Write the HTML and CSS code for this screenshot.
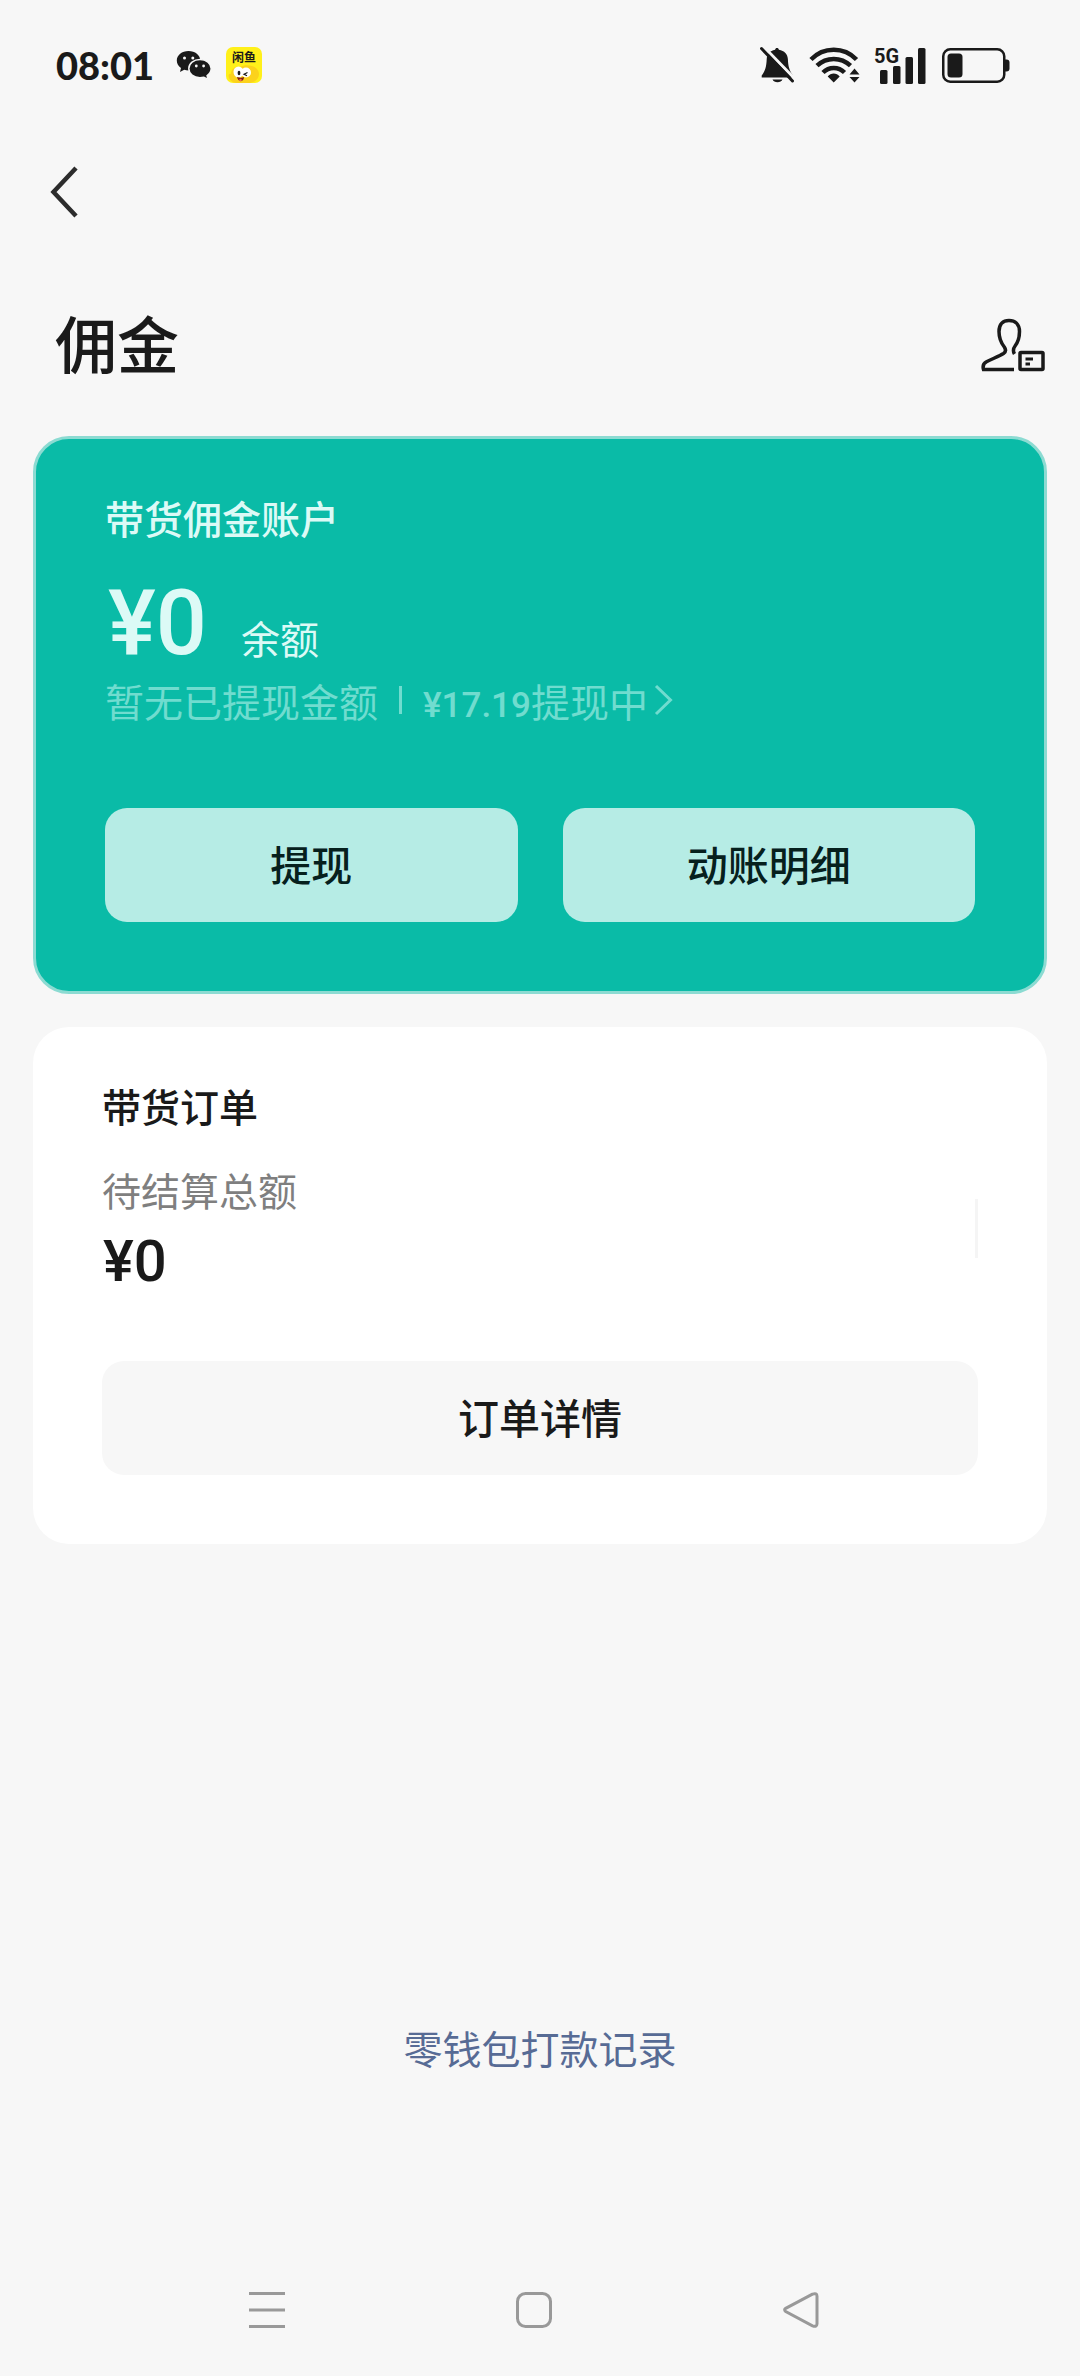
FILE: index.html
```html
<!DOCTYPE html>
<html lang="zh-CN">
<head>
<meta charset="utf-8">
<meta name="viewport" content="width=device-width, initial-scale=1">
<title>佣金</title>
<link rel="stylesheet" href="styles.css">
</head>
<body>
<div class="page">
  <div class="status">
    <div class="status-group">
      <span class="time">08:01</span>
      <svg width="36" height="30" viewBox="0 0 36 30" aria-hidden="true">
        <path fill="#1a1a1a" d="M12.500 1C5.900 1 .8 5.100.8 10.600c0 3.100 1.600 5.700 4.200 7.500l-1 4 4.200-2.300c1.400.4 2.800.6 4.300.6 6.600 0 11.800-4.300 11.800-9.800S19.100 1 12.500 1z"/>
        <path fill="#1a1a1a" stroke="#f7f7f7" stroke-width="1.500" d="M24 9.500c-6.300 0-11.200 4-11.200 9.100s4.900 9.100 11.200 9.100c1.400 0 2.700-.2 3.900-.5l4.100 2.200-.9-3.700c2.500-1.700 4.100-4.200 4.100-7.100 0-5.100-4.900-9.100-11.200-9.100z"/>
        <g fill="#f7f7f7"><circle cx="8.500" cy="8" r="1.500"/><circle cx="16.800" cy="8" r="1.500"/><circle cx="20.300" cy="16" r="1.400"/><circle cx="27.600" cy="16" r="1.400"/></g>
      </svg>
      <svg width="36" height="36" viewBox="0 0 36 36" role="img" aria-label="闲鱼">
        <rect width="36" height="36" rx="7" fill="#fff01a"/>
        <path fill="#fcd21c" d="M3 31c-1-3 0-5 2-4 0-5 4-8 9-7 7-4 19-1 19 7 0 5-4 8-9 9H12c-4 0-7-1-9-5z"/>
        <text class="app-label" x="18" y="15" text-anchor="middle">闲鱼</text>
        <ellipse cx="12.500" cy="25" rx="5" ry="5.500" fill="#fff"/><ellipse cx="20" cy="25.500" rx="5" ry="5" fill="#fff"/>
        <ellipse cx="13" cy="26" rx="1.400" ry="2.200" fill="#1a1a1a"/>
        <path d="M21.500 25.500l-3.500 1.700 3 1.500" fill="none" stroke="#1a1a1a" stroke-width="1.200"/>
        <path d="M11 30c3 1 5 1 7 0 0 5.500-6 5.500-7 0z" fill="#7c1f12"/><circle cx="14.500" cy="33" r="1.300" fill="#f36b4b"/>
      </svg>
    </div>
    <div class="status-group">
      <svg width="36" height="36" viewBox="0 0 36 36" aria-hidden="true">
        <path fill="#1a1a1a" d="M18 1c1 0 1.700.6 1.900 1.700 5.500.9 8.800 4.600 9 9.600.2 7.200 1.500 11 4.900 16v2.200H2.700v-2c3.500-4.500 4.700-9 5-16.200.2-5 3.200-8.700 8.400-9.600C16.300 1.600 17 1 18 1zM13.500 32.500h10c-.8 1.700-2.700 2.700-5 2.700s-4.200-1-5-2.700z"/>
        <path d="M4-1l32 33" stroke="#f7f7f7" stroke-width="3"/>
        <path d="M2.500 1.500l31 32.500" stroke="#1a1a1a" stroke-width="3" stroke-linecap="round"/>
      </svg>
      <svg width="51" height="36" viewBox="0 0 51 36" aria-hidden="true">
        <g fill="none" stroke="#1a1a1a" stroke-width="4.500"><path d="M2 12.500c12.500-13 33-13 45.500 0"/><path d="M8 18.700c9.500-9 24-9 33.500 0"/><path d="M14 25.500c6-6 15.500-6 21.500 0"/></g>
        <path fill="#1a1a1a" d="M24.700 35.500l-6-6c3-4 9-4 12 0zM45.500 21.500l5 6h-10zM45.500 35.500l-5-5.500h10z"/>
      </svg>
      <svg width="54" height="37" viewBox="0 0 54 37" role="img" aria-label="5G">
        <text class="net-label" x="0" y="16">5G</text>
        <g fill="#1a1a1a"><rect x="6" y="23" width="7.500" height="14" rx="1.500"/><rect x="19" y="19" width="7.500" height="18" rx="1.500"/><rect x="31.500" y="10" width="7.500" height="27" rx="1.500"/><rect x="44" y="1" width="7.500" height="36" rx="1.500"/></g>
      </svg>
      <svg width="68" height="35" viewBox="0 0 68 35" aria-hidden="true">
        <rect x="1.250" y="1.250" width="61" height="32.500" rx="7" fill="none" stroke="#1a1a1a" stroke-width="2.500"/>
        <rect x="5.500" y="5.500" width="15" height="24" rx="3.500" fill="#1a1a1a"/>
        <path fill="#1a1a1a" d="M63 11.500h1.500a3 3 0 0 1 3 3v6a3 3 0 0 1-3 3H63z"/>
      </svg>
    </div>
  </div>

  <header class="header">
    <button class="back" type="button" aria-label="返回">
      <svg width="28" height="52" viewBox="0 0 28 52" aria-hidden="true"><path d="M26 2L3.500 26 26 50" fill="none" stroke="#2c2c2c" stroke-width="4.500"/></svg>
    </button>
    <div class="title-row">
      <h1 class="title">佣金</h1>
      <button class="profile" type="button" aria-label="账户信息">
        <svg width="64" height="54" viewBox="0 0 64 54" fill="none" stroke="#1a1a1a" stroke-width="3.500" aria-hidden="true">
          <path d="M33 51.500H2.500C1.500 48 2 45.700 5.500 43.800c6-3.200 12-5.300 17-8.300 2.500-1.700 2.500-4 .8-6.500C19 23.500 18 18 18 13.500 18 6 22 2.500 28 2.500S38.500 6 38.500 13.500c0 5.500-1.300 10.300-4.300 14.200-1.700 2.300-2.500 5.300-.7 8.300"/>
          <rect x="39" y="34.500" width="23" height="17" rx="1"/>
          <path stroke-width="3" d="M44.500 41h7.500M44.500 46h4.500"/>
        </svg>
      </button>
    </div>
  </header>

  <main class="cards">
    <section class="card account">
      <h2 class="card-title">带货佣金账户</h2>
      <div class="balance"><span class="amount">¥0</span><span class="balance-label">余额</span></div>
      <div class="detail">
        <span>暂无已提现金额</span>
        <span class="divider"></span>
        <a class="pending" href="#withdrawing"><span><span class="pending-amount">¥17.19</span>提现中</span><svg width="20" height="32" viewBox="0 0 20 32" aria-hidden="true"><path d="M2 2l14.500 14L2 30" fill="none" stroke="currentColor" stroke-width="3"/></svg></a>
      </div>
      <div class="actions">
        <button class="btn" type="button">提现</button>
        <button class="btn" type="button">动账明细</button>
      </div>
    </section>

    <section class="card orders">
      <h2 class="card-title">带货订单</h2>
      <div class="totals">
        <div class="total">
          <div class="total-label">待结算总额</div>
          <div class="total-amount">¥0</div>
        </div>
        <span class="totals-rule"></span>
      </div>
      <button class="btn" type="button">订单详情</button>
    </section>
  </main>

  <footer class="footer">
    <a class="records" href="#records">零钱包打款记录</a>
  </footer>

  <nav class="system-nav" aria-label="系统导航">
    <button type="button" aria-label="最近任务"><svg width="36" height="36" viewBox="0 0 36 36"><path d="M0 1.500h36M0 18h36M0 34.500h36"/></svg></button>
    <button type="button" aria-label="主屏幕"><svg width="36" height="36" viewBox="0 0 36 36"><rect x="1.500" y="1.500" width="33" height="33" rx="8"/></svg></button>
    <button type="button" aria-label="返回"><svg width="36" height="36" viewBox="0 0 36 36"><path d="M29.500 2.200L2.700 16.300q-2.200 1.500 0 3.200L29.500 33.800q4.500 1.500 4.500-2V4.200q0-3.500-4.500-2z"/></svg></button>
  </nav>
</div>
</body>
</html>
```
FILE: styles.css
```css
* {
  box-sizing: border-box;
}

body {
  margin: 0;
  background: #f7f7f7;
  color: #1a1a1a;
  font-family: "Noto Sans CJK SC", sans-serif;
  font-size: 39px;
  line-height: 54px;
}

h1,
h2 {
  margin: 0;
}

button {
  margin: 0;
  padding: 0;
  border: 0;
  background: none;
  color: inherit;
  font: inherit;
  cursor: pointer;
}

a {
  color: inherit;
  text-decoration: none;
}

svg {
  display: block;
  flex: none;
  overflow: visible;
}

.page {
  display: flex;
  flex-direction: column;
  min-height: 100vh;
}

.status {
  display: flex;
  align-items: center;
  justify-content: space-between;
  height: 130px;
  padding: 0 70px 0 56px;
}

.status-group {
  display: flex;
  align-items: center;
  gap: 14px;
}

.time {
  margin-right: 8px;
  font-family: Lato, sans-serif;
  font-size: 38px;
  font-weight: 900;
}

.app-label {
  fill: #1a1a1a;
  font-size: 12px;
  font-weight: 700;
}

.net-label {
  fill: #1a1a1a;
  font-family: Roboto, sans-serif;
  font-size: 20px;
  font-weight: 700;
}

.back {
  display: flex;
  align-items: center;
  height: 124px;
  padding: 0 50px;
}

.title-row {
  display: flex;
  align-items: center;
  justify-content: space-between;
  height: 182px;
  padding: 0 35px 0 55px;
}

.title {
  padding-bottom: 6px;
  font-size: 62px;
  font-weight: 500;
  line-height: 92px;
}

.cards {
  display: flex;
  flex-direction: column;
  gap: 33px;
  padding: 0 33px;
}

.card {
  border-radius: 36px;
}

.card-title {
  font-size: 39px;
  font-weight: 500;
  line-height: 54px;
}

.account {
  padding: 51px 69px 69px;
  border: 3px solid #8cdbd2;
  background: #0abba7;
  color: #dcfaf6;
}

.balance {
  display: flex;
  align-items: baseline;
  gap: 34px;
  margin-top: 30px;
  padding-left: 3px;
}

.amount {
  font-family: Roboto, sans-serif;
  font-size: 90px;
  font-weight: 500;
  line-height: 100px;
}

.detail {
  display: flex;
  align-items: center;
  color: #70dccf;
  line-height: 52px;
}

.divider {
  width: 3px;
  height: 28px;
  margin: 0 21px;
  background: currentColor;
}

.pending {
  display: flex;
  align-items: center;
}

.pending svg {
  margin-left: 6px;
}

.pending-amount {
  font-family: Roboto, sans-serif;
  font-size: 35px;
  font-weight: 500;
  line-height: 36px;
}

.actions {
  display: grid;
  grid-template-columns: 1fr 1fr;
  gap: 45px;
  margin-top: 82px;
}

.btn {
  height: 114px;
  padding-bottom: 4px;
  border-radius: 22px;
  background: #f7f7f7;
  color: #1a1a1a;
  font-size: 41px;
  font-weight: 500;
}

.account .btn {
  background: #b6ece5;
  color: #06201d;
}

.orders {
  display: flex;
  flex-direction: column;
  padding: 51px 69px 69px;
  background: #fff;
}

.totals {
  display: flex;
  align-items: flex-start;
  justify-content: space-between;
  margin: 30px 0 55px;
}

.total-label {
  color: #7f7f7f;
}

.total-amount {
  padding-left: 1px;
  font-family: Roboto, sans-serif;
  font-size: 58px;
  font-weight: 500;
  line-height: 90px;
}

.totals-rule {
  width: 3px;
  height: 59px;
  margin-top: 37px;
  background: #f5f5f5;
}

.footer {
  display: flex;
  justify-content: center;
  margin-top: auto;
  padding: 80px 0 170px;
}

.records {
  color: #576b95;
}

.system-nav {
  display: grid;
  grid-template-columns: repeat(3, 1fr);
  height: 132px;
  padding: 0 146px 0 134px;
}

.system-nav button {
  display: flex;
  align-items: center;
  justify-content: center;
}

.system-nav svg {
  fill: none;
  stroke: #999;
  stroke-width: 3;
}
```
